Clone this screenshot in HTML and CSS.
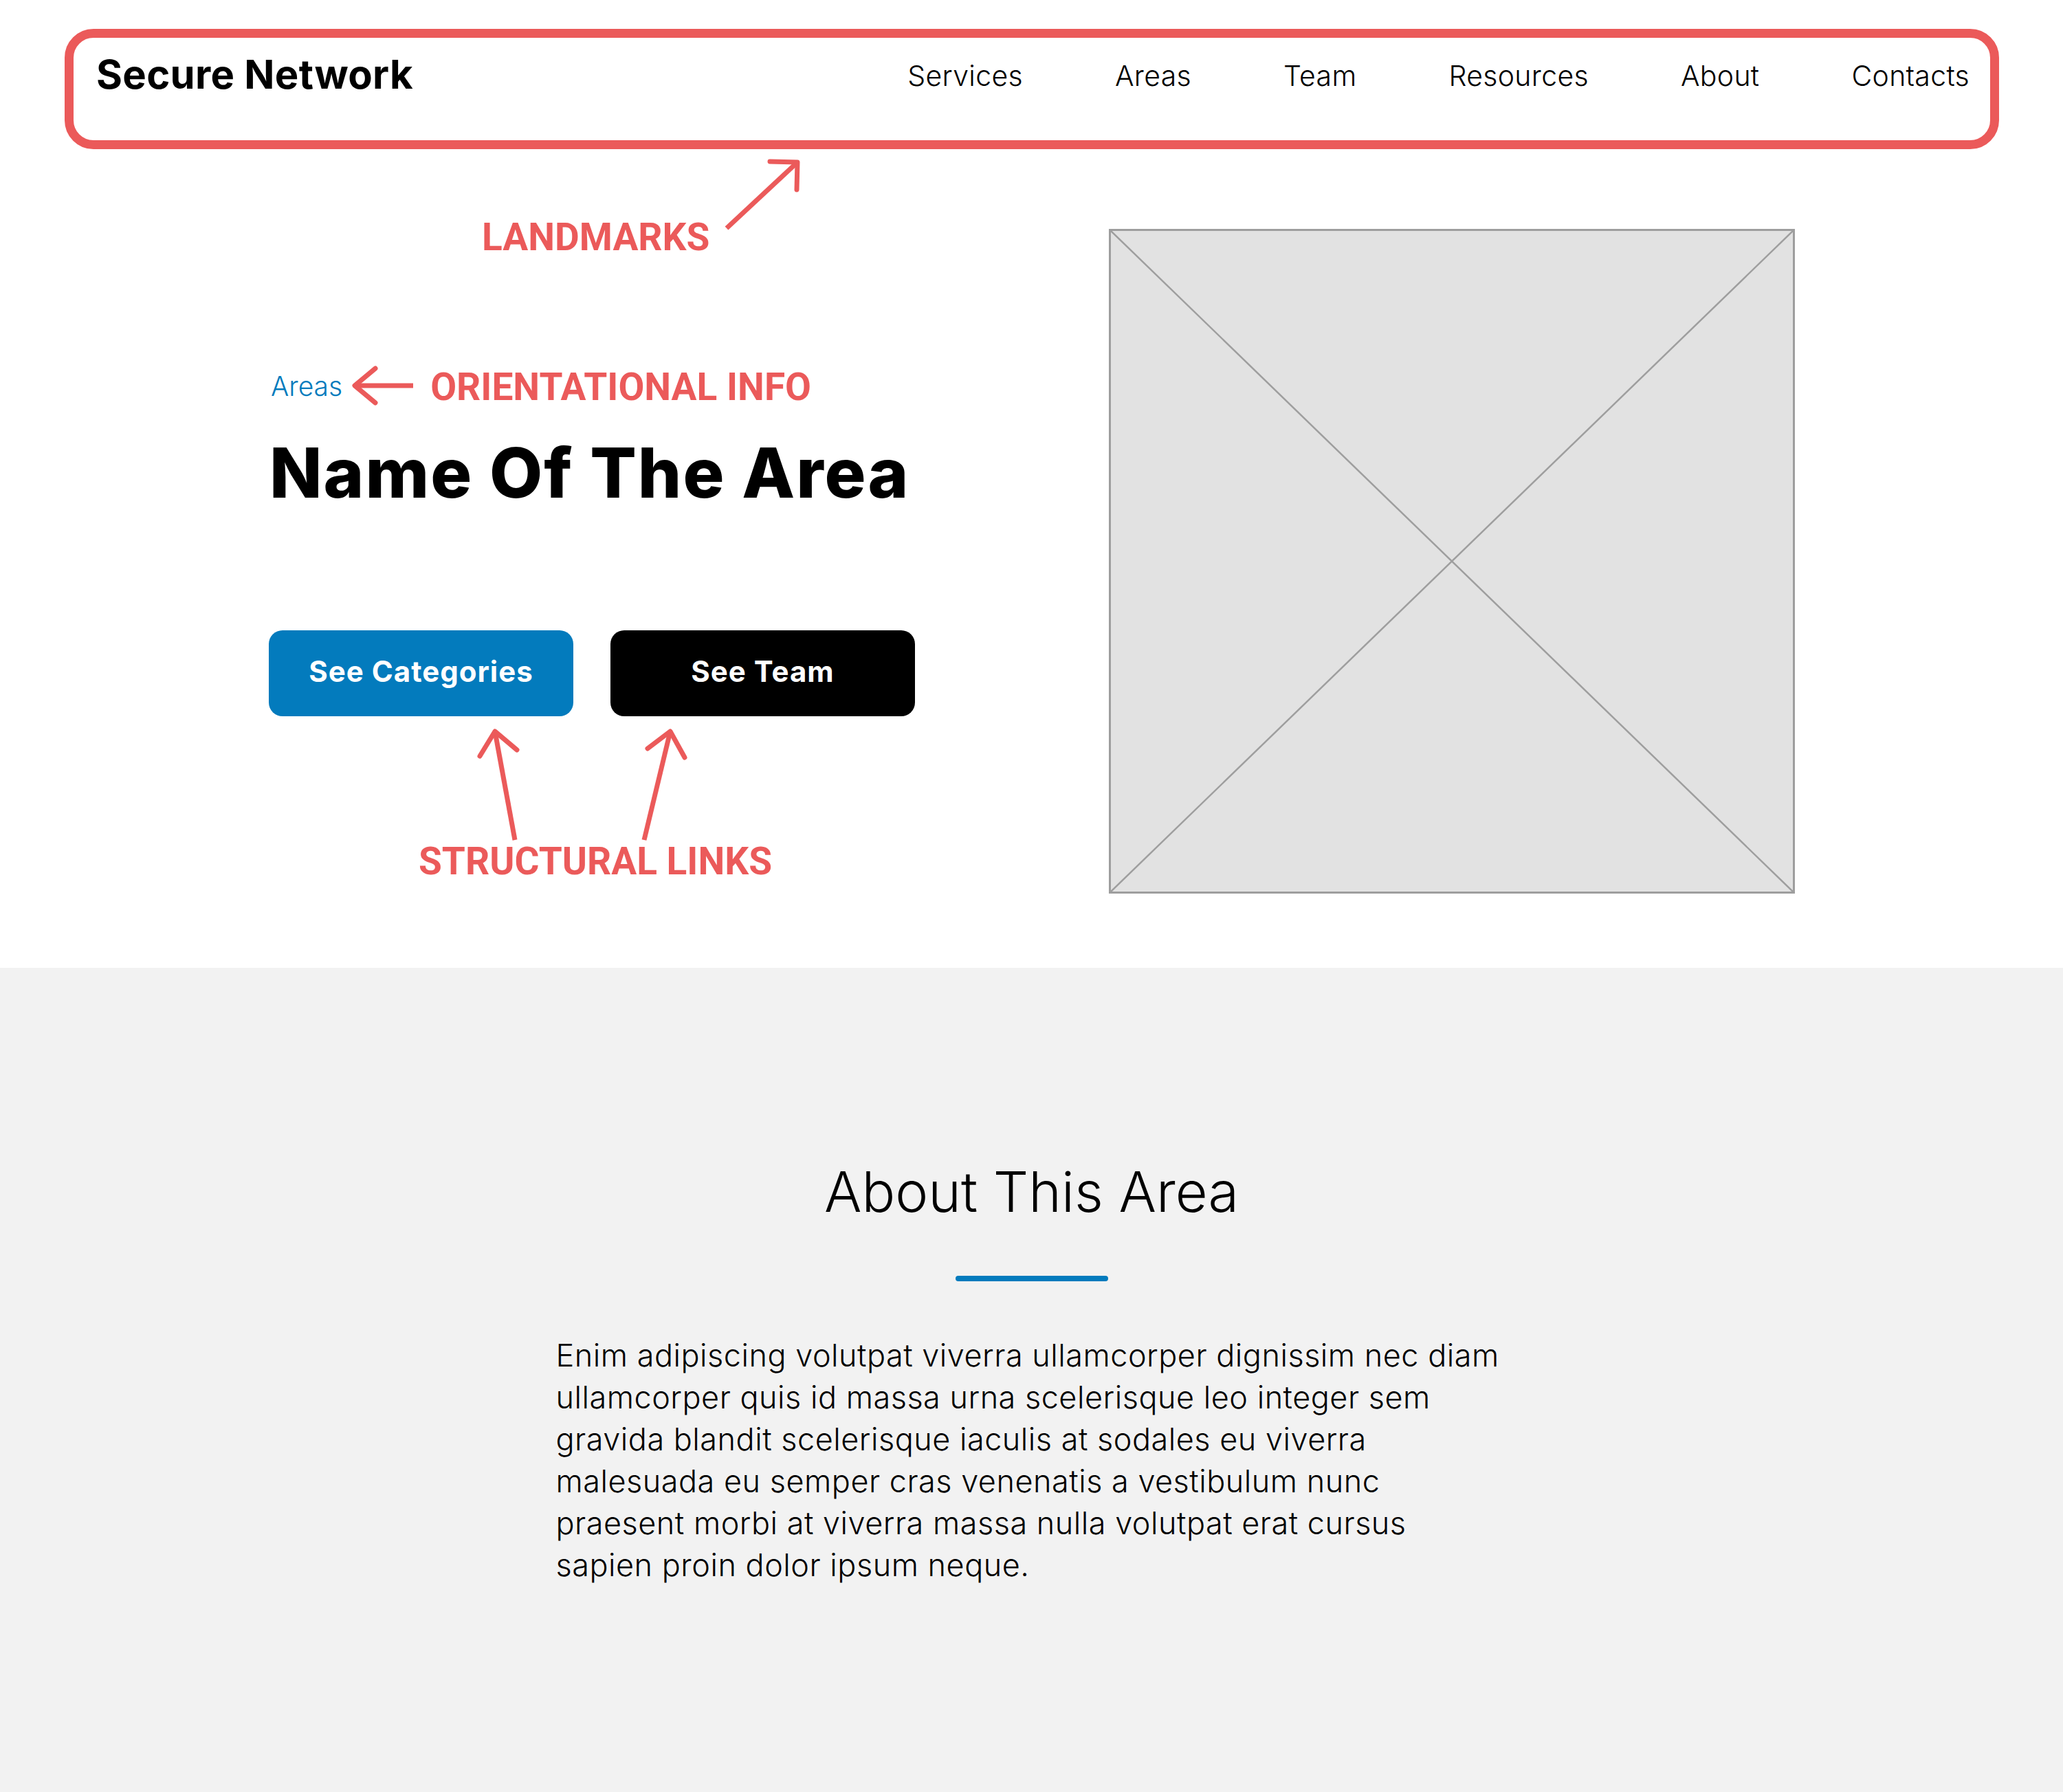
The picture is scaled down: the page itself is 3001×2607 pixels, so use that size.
FILE: index.html
```html
<!DOCTYPE html>
<html lang="en">
<head>
<meta charset="utf-8">
<title>Secure Network – Name Of The Area</title>
<link rel="stylesheet" href="styles.css">
</head>
<body>
<div class="top">
  <header class="site-header">
    <a class="logo" href="#">Secure Network</a>
    <nav class="main-nav">
      <a href="#">Services</a>
      <a href="#">Areas</a>
      <a href="#">Team</a>
      <a href="#">Resources</a>
      <a href="#">About</a>
      <a href="#">Contacts</a>
    </nav>
  </header>

  <div class="note-landmarks">
    <span class="note">LANDMARKS</span>
    <svg class="arrow-landmarks" width="120" height="115" viewBox="0 0 120 115">
      <path d="M70 9 L110 10 L109 50" fill="none" stroke="#eb5a5a" stroke-width="7" stroke-linecap="round" stroke-linejoin="round"/>
      <path d="M110 10 L7 106" fill="none" stroke="#eb5a5a" stroke-width="7" stroke-linecap="butt"/>
    </svg>
  </div>

  <section class="hero">
    <div class="hero-main">
      <div class="crumb-row">
        <a class="crumb" href="#">Areas</a>
        <svg class="arrow-left" width="95" height="60" viewBox="0 0 95 60">
          <path d="M36 5 L6 30 L36 55" fill="none" stroke="#eb5a5a" stroke-width="7" stroke-linecap="round" stroke-linejoin="round"/>
          <path d="M6 30 H91" fill="none" stroke="#eb5a5a" stroke-width="7"/>
        </svg>
        <span class="note">ORIENTATIONAL INFO</span>
      </div>
      <h1 class="title">Name Of The Area</h1>
      <div class="actions">
        <a class="btn btn-blue" href="#">See Categories</a>
        <a class="btn btn-black" href="#">See Team</a>
      </div>
      <div class="links-note">
        <svg class="arrows-up" width="514" height="168" viewBox="0 0 514 168">
          <path d="M140 164 L111 6" fill="none" stroke="#eb5a5a" stroke-width="7"/>
          <path d="M89 42 L111 6 L143 33" fill="none" stroke="#eb5a5a" stroke-width="7" stroke-linecap="round" stroke-linejoin="round"/>
          <path d="M328 164 L366 6" fill="none" stroke="#eb5a5a" stroke-width="7"/>
          <path d="M333 31 L366 6 L387 44" fill="none" stroke="#eb5a5a" stroke-width="7" stroke-linecap="round" stroke-linejoin="round"/>
        </svg>
        <span class="note">STRUCTURAL LINKS</span>
      </div>
    </div>
    <div class="placeholder">
      <svg class="placeholder-x" viewBox="0 0 100 100" preserveAspectRatio="none">
        <line x1="0" y1="0" x2="100" y2="100" stroke="#9e9e9e" stroke-width="2.5" vector-effect="non-scaling-stroke"/>
        <line x1="100" y1="0" x2="0" y2="100" stroke="#9e9e9e" stroke-width="2.5" vector-effect="non-scaling-stroke"/>
      </svg>
    </div>
  </section>
</div>

<section class="about">
  <h2 class="about-title">About This Area</h2>
  <div class="about-bar"></div>
  <p class="about-text">Enim adipiscing volutpat viverra ullamcorper dignissim nec diam<br>
ullamcorper quis id massa urna scelerisque leo integer sem<br>
gravida blandit scelerisque iaculis at sodales eu viverra<br>
malesuada eu semper cras venenatis a vestibulum nunc<br>
praesent morbi at viverra massa nulla volutpat erat cursus<br>
sapien proin dolor ipsum neque.</p>
</section>
</body>
</html>
```

FILE: styles.css
```css
* { box-sizing: border-box; }

html, body {
  margin: 0;
  padding: 0;
  background: #ffffff;
  color: #000000;
  font-family: Inter, "Liberation Sans", Arial, sans-serif;
}

a { color: inherit; text-decoration: none; }

.top {
  position: relative;
  padding-top: 42px;
}

/* ---------- Header (outlined as landmark) ---------- */
.site-header {
  margin: 0 93px 0 94px;
  height: 175px;
  border: 13px solid #eb5a5a;
  border-radius: 42px;
  padding: 0 30px 0 33px;
  display: flex;
  justify-content: space-between;
  align-items: flex-start;
}

.logo {
  margin-top: 24px;
  font-size: 58px;
  line-height: 1;
  font-weight: 700;
  letter-spacing: 0.3px;
}

.main-nav {
  margin-top: 35px;
  display: flex;
  gap: 134px;
}

.main-nav a {
  font-size: 41px;
  line-height: 1;
  font-weight: 300;
  letter-spacing: 0.3px;
}

/* ---------- Annotation labels ---------- */
.note {
  font-family: Roboto, "Liberation Sans", Arial, sans-serif;
  font-weight: 700;
  font-size: 55px;
  line-height: 1;
  color: #eb5a5a;
  white-space: nowrap;
}

.note-landmarks {
  position: absolute;
  left: 701px;
  top: 226px;
  width: 470px;
  height: 150px;
}

.note-landmarks .note {
  position: absolute;
  left: 0;
  top: 92px;
}

.arrow-landmarks {
  position: absolute;
  left: 349px;
  top: 0;
}

/* ---------- Hero ---------- */
.hero {
  display: flex;
  align-items: flex-start;
  padding: 116px 390px 108px 391px;
}

.hero-main {
  width: 1222px;
  padding-top: 198px;
}

.crumb-row {
  display: flex;
  align-items: flex-start;
  height: 60px;
}

.crumb {
  margin-top: 11px;
  margin-left: 3px;
  font-size: 39px;
  line-height: 1;
  font-weight: 300;
  color: #037bbd;
}

.arrow-left {
  margin-left: 12px;
  display: block;
}

.crumb-row .note {
  margin-top: 5px;
  margin-left: 21px;
}

.title {
  margin: 47px 0 0 1px;
  font-size: 100px;
  line-height: 1;
  font-weight: 800;
  letter-spacing: 2px;
}

.actions {
  margin-top: 179px;
  display: flex;
  gap: 54px;
}

.btn {
  width: 443px;
  height: 125px;
  border-radius: 20px;
  padding-bottom: 6px;
  display: flex;
  align-items: center;
  justify-content: center;
  font-size: 42px;
  font-weight: 700;
  letter-spacing: 1px;
  color: #ffffff;
}

.btn-blue { background: #037bbd; }
.btn-black { background: #000000; }

.links-note {
  margin: 16px 0 0 218px;
  width: 514px;
  display: flex;
  flex-direction: column;
}

.arrows-up { display: block; }

.links-note .note {
  display: block;
}

.placeholder {
  position: relative;
  flex: 0 0 998px;
  height: 967px;
  background: #e2e2e2;
  border: 3px solid #9e9e9e;
}

.placeholder-x {
  display: block;
  width: 100%;
  height: 100%;
}

/* ---------- About ---------- */
.about {
  background: #f2f2f2;
  height: 1199px;
  padding-top: 286px;
  display: flex;
  flex-direction: column;
  align-items: center;
}

.about-title {
  margin: 0;
  font-size: 81px;
  line-height: 1;
  font-weight: 300;
}

.about-bar {
  margin-top: 81px;
  width: 222px;
  height: 8px;
  border-radius: 4px;
  background: #037bbd;
}

.about-text {
  margin: 77px 0 0;
  width: 1384px;
  font-size: 45px;
  line-height: 61px;
  font-weight: 300;
  letter-spacing: 0.5px;
}
```
